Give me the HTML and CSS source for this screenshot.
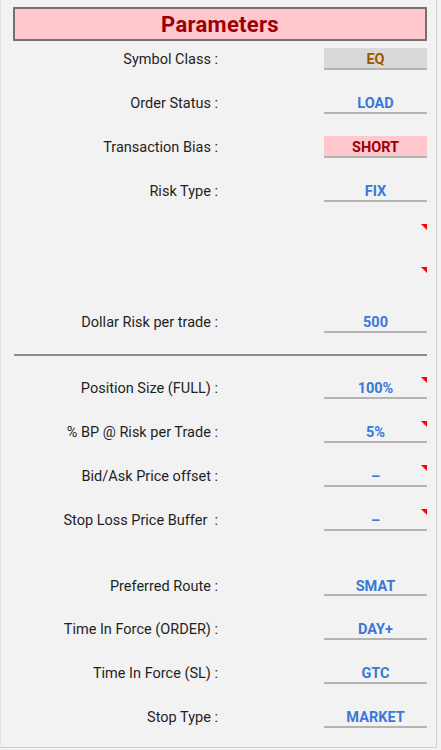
FILE: index.html
```html
<!DOCTYPE html>
<html lang="en">
<head>
    <meta charset="UTF-8">
    <meta name="viewport" content="width=device-width, initial-scale=1.0">
    <title>Parameters</title>
    <link rel="stylesheet" href="styles.css">
</head>
<body>
    <div class="sheet">
        <!-- Header -->
        <div class="title">Parameters</div>

        <!-- Parameter rows -->
        <div class="params">
            <div class="label">Symbol Class :</div>
            <div class="value neutral">EQ</div>
            <div class="blank"></div>

            <div class="label">Order Status :</div>
            <div class="value">LOAD</div>
            <div class="blank"></div>

            <div class="label">Transaction Bias :</div>
            <div class="value bad">SHORT</div>
            <div class="blank"></div>

            <div class="label">Risk Type :</div>
            <div class="value">FIX</div>
            <div class="blank"></div>

            <div class="label"></div>
            <div class="value empty note"></div>
            <div class="blank"></div>

            <div class="label"></div>
            <div class="value empty note"></div>
            <div class="blank"></div>

            <div class="label">Dollar Risk per trade :</div>
            <div class="value">500</div>

            <!-- Divider -->
            <div class="divider"></div>
            <div class="blank"></div>

            <div class="label">Position Size (FULL) :</div>
            <div class="value note">100%</div>
            <div class="blank"></div>

            <div class="label">% BP @ Risk per Trade :</div>
            <div class="value note">5%</div>
            <div class="blank"></div>

            <div class="label">Bid/Ask Price offset :</div>
            <div class="value note">&ndash;</div>
            <div class="blank"></div>

            <div class="label">Stop Loss Price Buffer &nbsp;:</div>
            <div class="value note">&ndash;</div>
            <div class="blank"></div>
            <div class="blank"></div>

            <div class="label">Preferred Route :</div>
            <div class="value">SMAT</div>
            <div class="blank"></div>

            <div class="label">Time In Force (ORDER) :</div>
            <div class="value">DAY+</div>
            <div class="blank"></div>

            <div class="label">Time In Force (SL) :</div>
            <div class="value">GTC</div>
            <div class="blank"></div>

            <div class="label">Stop Type :</div>
            <div class="value">MARKET</div>
        </div>
    </div>
</body>
</html>
```

FILE: styles.css
```css
/* General styles */
body {
    margin: 0;
    padding: 0;
    background: #f2f2f2;
    font-family: Roboto, "Liberation Sans", Arial, sans-serif;
    color: #1f1f1f;
}

/* Sheet frame */
.sheet {
    width: 437px;
    height: 748px;
    padding-top: 7px;
    box-sizing: border-box;
    border-left: 1px solid #e4e4e4;
    border-right: 1px solid #d0d0d0;
    border-bottom: 1px solid #d0d0d0;
    overflow: hidden;
}

/* Header */
.title {
    margin: 0 9px 0 12px;
    height: 34px;
    box-sizing: border-box;
    border: 2px solid #737373;
    background: #ffc7ce;
    color: #9c0006;
    font-size: 22px;
    font-weight: bold;
    text-align: center;
    line-height: 32px;
    letter-spacing: 0.3px;
}

/* Parameter grid */
.params {
    display: grid;
    grid-template-columns: 208px 102px 103px;
    grid-auto-rows: 21.95px;
    margin-top: 7px;
    padding-left: 13px;
}

.label {
    grid-column: 1;
    text-align: right;
    padding-right: 4px;
    font-size: 14.5px;
    line-height: 24px;
    white-space: nowrap;
}

.value {
    grid-column: 3;
    position: relative;
    box-sizing: border-box;
    border-bottom: 2px solid #b4b4b4;
    text-align: center;
    font-size: 14.5px;
    font-weight: bold;
    line-height: 23px;
    color: #3a78d8;
}

.value.empty {
    border-bottom: none;
}

.value.neutral {
    background: #d9d9d9;
    color: #9c5700;
}

.value.bad {
    background: #ffc7ce;
    color: #9c0006;
}

/* Comment indicator */
.value.note::after {
    content: "";
    position: absolute;
    top: 0;
    right: 0;
    border-top: 6px solid #ff0000;
    border-left: 6px solid transparent;
}

.blank {
    grid-column: 1 / -1;
}

.divider {
    grid-column: 1 / -1;
    border-bottom: 2px solid #8c8c8c;
    margin-bottom: -1px;
}
```
